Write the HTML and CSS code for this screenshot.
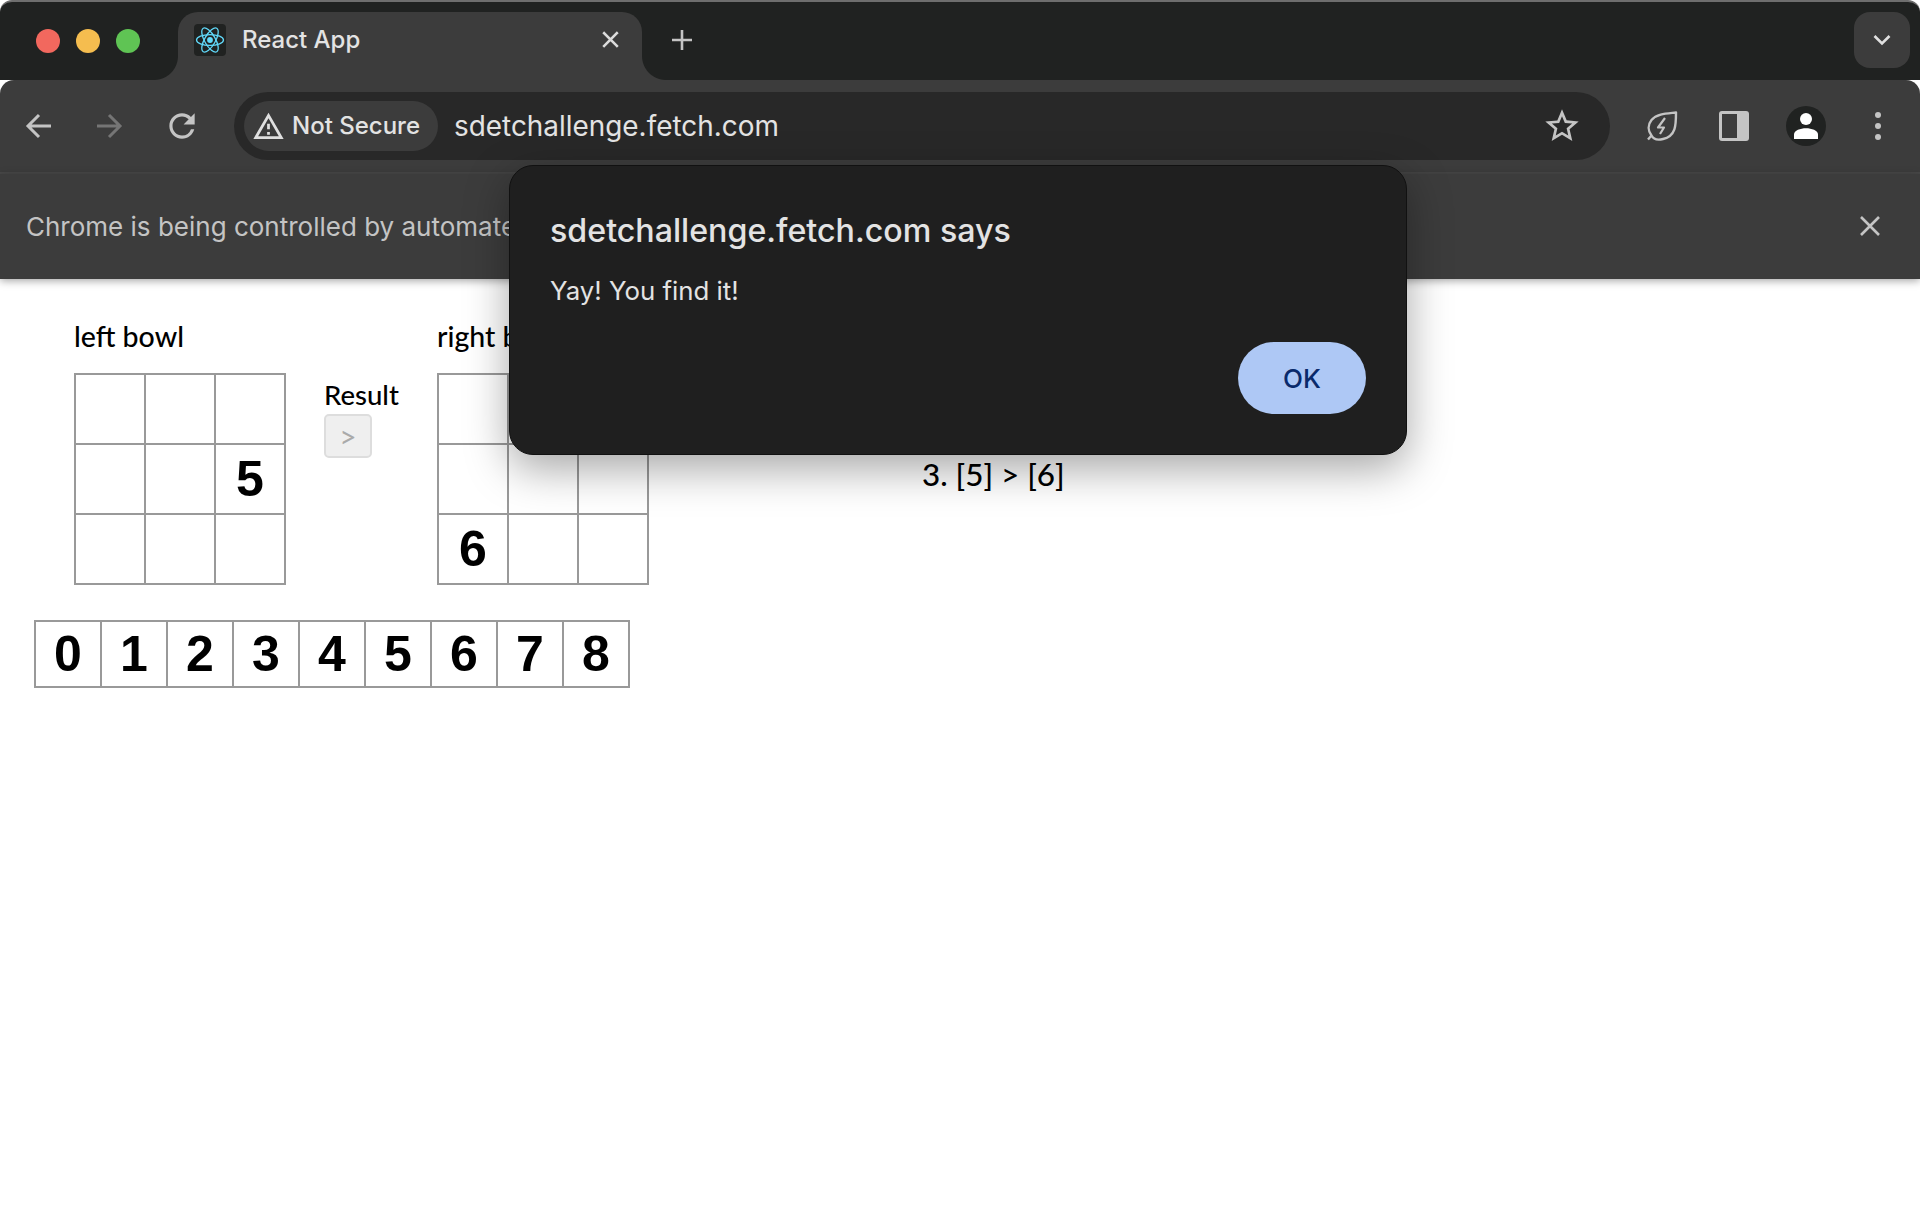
FILE: index.html
```html
<!DOCTYPE html>
<html lang="en">
<head>
<meta charset="utf-8">
<title>React App</title>
<link rel="stylesheet" href="styles.css">
</head>
<body>
<div class="window">
  <header class="tabstrip">
    <div class="lights"><span class="light red"></span><span class="light yellow"></span><span class="light green"></span></div>
    <div class="tab">
      <span class="favicon">
        <svg viewBox="0 0 32 32" width="32" height="32" fill="none" stroke="#61dafb" stroke-width="1.3">
          <circle cx="16" cy="16" r="2.9" fill="#61dafb" stroke="none"/>
          <ellipse cx="16" cy="16" rx="13.5" ry="5.4"/>
          <ellipse cx="16" cy="16" rx="13.5" ry="5.4" transform="rotate(60 16 16)"/>
          <ellipse cx="16" cy="16" rx="13.5" ry="5.4" transform="rotate(120 16 16)"/>
        </svg>
      </span>
      <span class="tab-title">React App</span>
      <svg class="tab-close" viewBox="0 0 16 16" width="17" height="17" stroke="#dcdcdc" stroke-width="2.4" stroke-linecap="square"><path d="M2 2l12 12M14 2L2 14"/></svg>
    </div>
    <svg class="new-tab" viewBox="0 0 20 20" width="20" height="20" stroke="#c4c4c4" stroke-width="2.6"><path d="M10 0v20M0 10h20"/></svg>
    <div class="tab-search">
      <svg viewBox="0 0 18 12" width="18" height="12" fill="none" stroke="#e0e0e0" stroke-width="2.6"><path d="M1.5 2l7.5 7.5L16.5 2"/></svg>
    </div>
  </header>

  <nav class="toolbar">
    <svg class="nav-icon" viewBox="0 0 28 28" width="28" height="28" fill="none" stroke="#c4c4c4" stroke-width="3"><path d="M26 14H4M14 3L3 14l11 11"/></svg>
    <svg class="nav-icon" viewBox="0 0 28 28" width="28" height="28" fill="none" stroke="#757575" stroke-width="3"><path d="M2 14h22M14 3l11 11-11 11"/></svg>
    <svg class="nav-icon" viewBox="0 0 24 24" width="38" height="38" fill="#c4c4c4"><path d="M17.65 6.35A7.958 7.958 0 0 0 12 4c-4.42 0-7.99 3.58-7.99 8s3.57 8 7.99 8c3.73 0 6.84-2.55 7.73-6h-2.08A5.99 5.99 0 0 1 12 18c-3.31 0-6-2.69-6-6s2.69-6 6-6c1.66 0 3.14.69 4.22 1.78L13 11h7V4l-2.35 2.35z"/></svg>
    <div class="omnibox">
      <div class="chip">
        <svg viewBox="0 0 24 24" width="33" height="33" fill="#e0e0e0"><path d="M1 21h22L12 2 1 21zm3.47-2L12 5.99 19.53 19H4.47zM13 16h-2v2h2zm0-6h-2v4h2z"/></svg>
        <span class="chip-text">Not Secure</span>
      </div>
      <span class="url">sdetchallenge.fetch.com</span>
      <svg class="star" viewBox="0 0 24 24" width="40" height="40" fill="#c4c4c4"><path d="M22 9.24l-7.19-.62L12 2 9.19 8.63 2 9.24l5.46 4.73L5.82 21 12 17.27 18.18 21l-1.63-7.03L22 9.24zM12 15.4l-3.76 2.27 1-4.28-3.32-2.88 4.38-.38L12 6.1l1.71 4.04 4.38.38-3.32 2.88 1 4.28L12 15.4z"/></svg>
    </div>
    <div class="actions">
      <svg viewBox="0 0 32 32" width="32" height="32" fill="none" stroke="#c4c4c4" stroke-width="2.4" stroke-linejoin="round"><path d="M30 2.5C30 15 30 26 17 29 11 30.5 7 28.5 5.5 25.5 2 21 1.5 15 5.5 10 11 3.5 21 3.5 30 2.5Z"/><path d="M5.5 25.5L2 29.5"/><path d="M19 8l-7 9.5h6l-4 6.5" stroke-width="2.2"/></svg>
      <svg viewBox="0 0 30 30" width="30" height="30"><rect width="30" height="30" rx="3" fill="#c4c4c4"/><rect x="3" y="3" width="15" height="24" fill="#3c3c3c"/></svg>
      <span class="avatar">
        <svg viewBox="0 0 26 28" width="24" height="26" fill="#fff"><circle cx="13" cy="6.5" r="6.5"/><path d="M0 28v-5c0-4 7-6.5 13-6.5s13 2.5 13 6.5v5z"/></svg>
      </span>
      <svg viewBox="0 0 6 28" width="6" height="28" fill="#c4c4c4"><circle cx="3" cy="3" r="3"/><circle cx="3" cy="14" r="3"/><circle cx="3" cy="25" r="3"/></svg>
    </div>
  </nav>

  <div class="infobar">
    <span class="info-text">Chrome is being controlled by automated test software.</span>
    <svg class="info-close" viewBox="0 0 20 20" width="20" height="20" stroke="#c4c4c4" stroke-width="2.6"><path d="M1 1l18 18M19 1L1 19"/></svg>
  </div>

  <main class="page">
    <section class="game">
      <div class="bowl">
        <div class="label">left bowl</div>
        <div class="grid">
          <div class="cell"></div><div class="cell"></div><div class="cell"></div>
          <div class="cell"></div><div class="cell"></div><div class="cell">5</div>
          <div class="cell"></div><div class="cell"></div><div class="cell"></div>
        </div>
      </div>
      <div class="result">
        <div class="label">Result</div>
        <button class="result-btn" disabled>&gt;</button>
      </div>
      <div class="bowl">
        <div class="label">right bowl</div>
        <div class="grid">
          <div class="cell"></div><div class="cell"></div><div class="cell"></div>
          <div class="cell"></div><div class="cell"></div><div class="cell"></div>
          <div class="cell">6</div><div class="cell"></div><div class="cell"></div>
        </div>
      </div>
      <ol class="weighings">
        <li>3. [5] &gt; [6]</li>
      </ol>
    </section>
    <section class="coins">
      <div class="coin">0</div><div class="coin">1</div><div class="coin">2</div>
      <div class="coin">3</div><div class="coin">4</div><div class="coin">5</div>
      <div class="coin">6</div><div class="coin">7</div><div class="coin">8</div>
    </section>
  </main>

  <div class="dialog" role="alertdialog">
    <h2 class="dialog-title">sdetchallenge.fetch.com says</h2>
    <p class="dialog-body">Yay! You find it!</p>
    <div class="dialog-actions"><button class="ok">OK</button></div>
  </div>
</div>
</body>
</html>
```

FILE: styles.css
```css
* { box-sizing: border-box; }
html, body { margin: 0; height: 100%; }
body { background: #fff; font-family: Inter, "Liberation Sans", sans-serif; overflow: hidden; }

.window { position: relative; display: flex; flex-direction: column; height: 1220px; }

/* tab strip */
.tabstrip {
  height: 80px; display: flex; align-items: flex-start; background: #202221;
  border-top: 2px solid #6e6e6e; border-radius: 12px 12px 0 0; position: relative; z-index: 1;
}
.lights { display: flex; gap: 16px; margin: 27px 0 0 36px; }
.light { width: 24px; height: 24px; border-radius: 50%; }
.red { background: #f2685e; }
.yellow { background: #f5bd4f; }
.green { background: #5fc454; }

.tab {
  position: relative; width: 464px; height: 68px; margin: 10px 0 0 38px; padding: 12px 16px 0;
  display: flex; align-items: flex-start; background: #3c3c3c; border-radius: 20px 20px 0 0;
}
.tab::before, .tab::after { content: ""; position: absolute; bottom: 0; width: 24px; height: 24px; }
.tab::before { left: -24px; background: radial-gradient(circle at 0 0, #202221 23.5px, #3c3c3c 24.5px); }
.tab::after { right: -24px; background: radial-gradient(circle at 100% 0, #202221 23.5px, #3c3c3c 24.5px); }
.favicon { width: 32px; height: 32px; background: #202221; border-radius: 4px; flex: none; }
.favicon svg { display: block; }
.tab-title { margin-left: 16px; color: #e3e3e3; font-size: 24px; line-height: 32px; font-weight: 500; flex: 1; }
.tab-close { margin: 7px 7px 0 0; }
.new-tab { margin: 28px 0 0 30px; }
.tab-search {
  margin: 10px 10px 0 auto; width: 56px; height: 56px; border-radius: 16px; background: #3c3c3c;
  display: flex; align-items: center; justify-content: center;
}

/* toolbar */
.toolbar {
  height: 94px; padding: 12px 0; background: #3c3c3c; border-bottom: 2px solid #484848;
  border-radius: 14px 14px 0 0; display: flex; align-items: center;
}
.nav-icon:nth-child(1) { margin-left: 25px; }
.nav-icon:nth-child(2) { margin-left: 42px; }
.nav-icon:nth-child(3) { margin-left: 40px; }
.omnibox {
  margin-left: 33px; width: 1376px; height: 68px; border-radius: 34px; background: #282828;
  display: flex; align-items: center; padding: 0 28px 0 10px;
}
.chip {
  height: 50px; width: 194px; border-radius: 25px; background: #3c3c3c; display: flex; align-items: center;
  gap: 7px; padding-left: 8px; color: #e3e3e3; font-size: 24px; font-weight: 500; white-space: nowrap;
}
.chip-text { margin-bottom: 2px; }
.url { margin-left: 16px; color: #e3e3e3; font-size: 27.9px; flex: 1; white-space: nowrap; }
.actions { margin-left: 16px; display: grid; grid-template-columns: repeat(4, 72px); align-items: center; justify-items: center; }
.avatar {
  width: 40px; height: 40px; border-radius: 50%; background: #202221; display: flex; align-items: center; justify-content: center;
}

/* infobar */
.infobar {
  height: 105px; background: #3c3c3c; display: flex; align-items: center; justify-content: space-between;
  padding: 0 40px 0 26px; box-shadow: 0 2px 8px rgba(0,0,0,.35); position: relative;
}
.info-text { color: #c4c4c4; font-size: 26px; white-space: nowrap; }
.info-close { margin-bottom: 2px; }

/* page */
.page { flex: 1; background: #fff; font-family: Lato, "Liberation Sans", sans-serif; color: #000; }
.game { display: flex; align-items: flex-start; padding: 36px 0 0 74px; }
.label { font-size: 28.5px; line-height: 42px; font-weight: 500; }
.bowl { width: 212px; }
.bowl .label { margin-bottom: 16px; white-space: nowrap; }
.grid { display: grid; grid-template-columns: repeat(3, 70px); grid-auto-rows: 70px; width: 212px; border: solid #999; border-width: 2px 0 0 2px; }
.cell {
  border: solid #999; border-width: 0 2px 2px 0;
  display: flex; align-items: center; justify-content: center;
  font: 700 50px "Liberation Sans", sans-serif;
}
.result { width: 75px; margin: 61px 38px 0 38px; }
.result .label { font-size: 27.5px; line-height: 38px; }
.result-btn {
  display: block; width: 48px; height: 44px; padding: 0; border: 2px solid #ddd; border-radius: 5px;
  background: #efefef; color: #aaa; font: 30px Lato, sans-serif;
}
.weighings { list-style: none; margin: 139px 0 0 273px; padding: 0; font-size: 31.4px; line-height: 40px; font-weight: 500; white-space: nowrap; }

.coins { display: flex; width: 596px; margin: 35px 0 0 34px; border: solid #999; border-width: 2px 0 0 2px; }
.coin {
  width: 66px; height: 66px; border: solid #999; border-width: 0 2px 2px 0;
  display: flex; align-items: center; justify-content: center;
  font: 700 50px "Liberation Sans", sans-serif;
}

/* dialog */
.dialog {
  position: absolute; left: 509px; top: 165px; width: 898px; height: 290px; padding: 45px 40px 0 40px;
  background: #1f1f1f; border: 1px solid #111; border-radius: 24px;
  box-shadow: 0 14px 44px rgba(0,0,0,.35); z-index: 2;
}
.dialog-title { margin: 0; color: #e3e3e3; font-size: 32.2px; line-height: 40px; font-weight: 500; }
.dialog-body { margin: 22px 0 0; color: #e3e3e3; font-size: 25.8px; line-height: 36px; }
.dialog-actions { display: flex; justify-content: flex-end; margin-top: 33px; }
.ok {
  width: 128px; height: 72px; border: 0; border-radius: 36px; background: #aec8f5; color: #0a2a6b;
  font: 500 26px Inter, "Liberation Sans", sans-serif;
}
```
